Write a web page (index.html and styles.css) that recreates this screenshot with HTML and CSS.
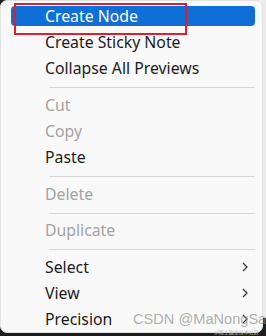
FILE: index.html
```html
<!DOCTYPE html>
<html>
<head>
    <title>Context Menu</title>
    <link rel="stylesheet" href="styles.css">
</head>
<body>
    <div class="menu">
        <div class="item active">Create Node</div>
        <div class="item">Create Sticky Note</div>
        <div class="item">Collapse All Previews</div>
        <div class="sep"></div>
        <div class="item disabled">Cut</div>
        <div class="item disabled">Copy</div>
        <div class="item">Paste</div>
        <div class="sep"></div>
        <div class="item disabled">Delete</div>
        <div class="sep"></div>
        <div class="item disabled">Duplicate</div>
        <div class="sep"></div>
        <div class="item sub">Select
            <svg class="chev" width="6" height="10" viewBox="0 0 6 10"><path d="M1 1l4 4-4 4" fill="none" stroke="#333" stroke-width="1.2"/></svg>
        </div>
        <div class="item sub">View
            <svg class="chev" width="6" height="10" viewBox="0 0 6 10"><path d="M1 1l4 4-4 4" fill="none" stroke="#333" stroke-width="1.2"/></svg>
        </div>
        <div class="item sub">Precision
            <svg class="chev" width="6" height="10" viewBox="0 0 6 10"><path d="M1 1l4 4-4 4" fill="none" stroke="#333" stroke-width="1.2"/></svg>
        </div>

        <!-- annotation box drawn over the first item -->
        <div class="mark"></div>
        <div class="watermark">CSDN @MaNongSa</div>
        <div class="watermark-small">@稀土掘金技术社区</div>
    </div>
</body>
</html>
```

FILE: styles.css
```css
body {
    margin: 0;
    width: 266px;
    height: 336px;
    overflow: hidden;
    background:
        linear-gradient(to right, transparent 250px, #ececec 250px) no-repeat 0 0 / 100% 318px,
        #1e1e1e;
    font-family: "Noto Sans", "Open Sans", sans-serif;
}

.menu {
    position: relative;
    display: flex;
    flex-direction: column;
    width: 263px;
    height: 333px;
    padding-top: 2px;
    box-sizing: border-box;
    background-color: #f9f9f9;
    border: 1px solid #e2e2e2;
    border-radius: 7px;
}

.item {
    display: flex;
    align-items: center;
    justify-content: space-between;
    height: 20px;
    margin: 3px 7px 3px 10px;
    padding: 0 7px 0 34px;
    border-radius: 4px;
    font-size: 15.8px;
    line-height: 20px;
    color: #1b1b1b;
}

.item.active {
    background-color: #0f6fd7;
    color: white;
}

.item.disabled {
    color: #a2a2a2;
}

.sep {
    height: 1px;
    margin: 6px 7px 4px 48px;
    background-color: #d8d8d8;
}

.mark {
    position: absolute;
    left: 13px;
    top: 2px;
    width: 169px;
    height: 28px;
    border: 2px solid #d8232f;
}

.watermark {
    position: absolute;
    left: 132px;
    top: 310px;
    white-space: nowrap;
    font-family: "Liberation Sans", Arial, sans-serif;
    font-size: 14.6px;
    color: rgba(140, 140, 140, 0.7);
}

.watermark-small {
    position: absolute;
    left: 213px;
    top: 327px;
    white-space: nowrap;
    font-family: "Noto Sans CJK SC", sans-serif;
    font-size: 5px;
    color: #c4c4c4;
}
```
